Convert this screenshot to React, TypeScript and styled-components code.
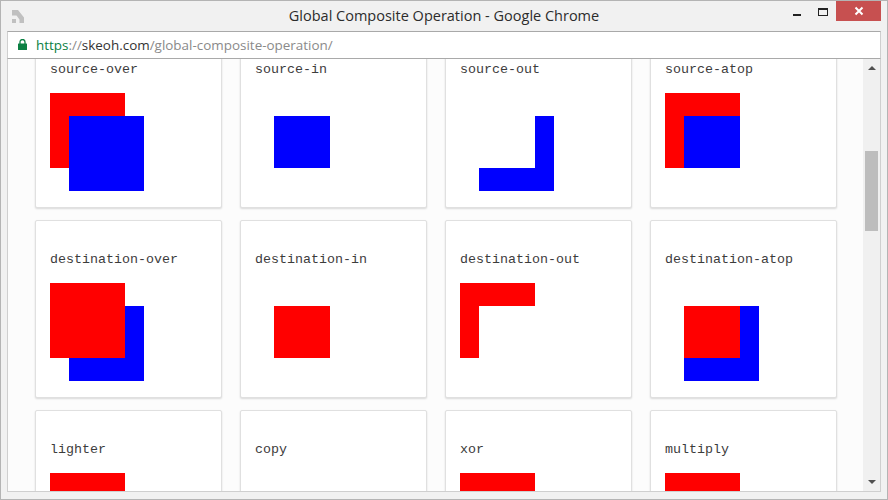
import React from "react";
import styled, { createGlobalStyle } from "styled-components";

const RED = "#ff0000";
const BLUE = "#0000ff";

type Shape = { x: number; y: number; w: number; h: number; fill: string };

type Demo = { name: string; shapes: Shape[] };

const redSquare = (fill = RED): Shape => ({ x: 0, y: 0, w: 75, h: 75, fill });
const blueSquare = (fill = BLUE): Shape => ({ x: 19, y: 23, w: 75, h: 75, fill });
const overlap = (fill: string): Shape => ({ x: 19, y: 23, w: 56, h: 52, fill });

const demos: Demo[] = [
    { name: "source-over", shapes: [redSquare(), blueSquare()] },
    { name: "source-in", shapes: [overlap(BLUE)] },
    {
        name: "source-out",
        shapes: [
            { x: 75, y: 23, w: 19, h: 75, fill: BLUE },
            { x: 19, y: 75, w: 75, h: 23, fill: BLUE },
        ],
    },
    { name: "source-atop", shapes: [redSquare(), overlap(BLUE)] },
    { name: "destination-over", shapes: [blueSquare(), redSquare()] },
    { name: "destination-in", shapes: [overlap(RED)] },
    {
        name: "destination-out",
        shapes: [
            { x: 0, y: 0, w: 75, h: 23, fill: RED },
            { x: 0, y: 0, w: 19, h: 75, fill: RED },
        ],
    },
    { name: "destination-atop", shapes: [blueSquare(), overlap(RED)] },
    { name: "lighter", shapes: [redSquare()] },
    { name: "copy", shapes: [] },
    { name: "xor", shapes: [redSquare()] },
    { name: "multiply", shapes: [redSquare()] },
];

const GlobalStyle = createGlobalStyle`
    html, body {
        margin: 0;
        padding: 0;
        width: 888px;
        height: 500px;
        overflow: hidden;
        background: #f1f1f1;
    }
`;

const Chrome = styled.div`
    box-sizing: border-box;
    width: 888px;
    height: 500px;
    display: flex;
    flex-direction: column;
    border: 1px solid #b4b4b4;
    background: #f1f1f1;
    overflow: hidden;
`;

const TitleBar = styled.div`
    position: relative;
    flex: none;
    height: 30px;
    display: flex;
    align-items: center;
    justify-content: center;
`;

const Title = styled.div`
    font-family: "Open Sans", "Noto Sans", sans-serif;
    font-size: 14.5px;
    color: #2c2c2c;
    margin-top: -1px;
`;

const AppIcon = styled.svg`
    position: absolute;
    left: 11px;
    top: 9px;
`;

const WindowButtons = styled.div`
    position: absolute;
    right: 6px;
    top: 0;
    display: flex;
    align-items: flex-start;
`;

const WinButton = styled.div<{ $shift?: number }>`
    box-sizing: border-box;
    width: 29px;
    height: 20px;
    padding-left: ${(p) => p.$shift ?? 0}px;
    display: flex;
    align-items: center;
    justify-content: center;
`;

const CloseButton = styled(WinButton)`
    width: 45px;
    background: #c75050;
`;

const AddressBar = styled.div`
    flex: none;
    box-sizing: border-box;
    height: 28px;
    margin: 0 6px;
    display: flex;
    align-items: center;
    gap: 9px;
    padding-left: 10px;
    background: #ffffff;
    border: 1px solid #a9a9a9;
    border-right-color: #cfcfcf;
    border-left-color: #cfcfcf;
    font-family: "Open Sans", "Noto Sans", sans-serif;
    font-size: 13.45px;
`;

const LockIcon = styled.svg`
    flex: none;
    margin-top: -2px;
`;

const Url = styled.div`
    color: #8a8a8a;
    white-space: nowrap;
`;

const Scheme = styled.span`
    color: #0b8043;
`;

const Host = styled.span`
    color: #333333;
`;

const Viewport = styled.div`
    flex: 1;
    min-height: 0;
    margin: 0 6px 7px;
    display: flex;
    border: 1px solid #cfcfcf;
    border-top: none;
    background: #fcfcfc;
    overflow: hidden;
`;

const Page = styled.div`
    flex: 1;
    min-width: 0;
    overflow: hidden;
`;

const Grid = styled.div`
    display: grid;
    grid-template-columns: repeat(4, 187px);
    grid-auto-rows: 178px;
    gap: 12px 18px;
    margin: -29px 0 0 27px;
`;

const Card = styled.div`
    box-sizing: border-box;
    padding: 31px 14px 0;
    background: #ffffff;
    border: 1px solid #e0e0e0;
    border-radius: 2px;
    box-shadow: 0 1px 2px rgba(0, 0, 0, 0.14);
    overflow: hidden;
`;

const CardTitle = styled.div`
    font-family: "Liberation Mono", "Courier New", monospace;
    font-size: 13.33px;
    line-height: 16px;
    color: #3c3c3c;
`;

const Preview = styled.svg`
    display: block;
    margin-top: 15px;
`;

const ScrollBar = styled.div`
    flex: none;
    width: 17px;
    display: flex;
    flex-direction: column;
    align-items: center;
    background: #f0f0f0;
`;

const ScrollArrow = styled.svg`
    flex: none;
    margin: 7px 0;
`;

const ScrollTrack = styled.div`
    flex: 1;
    box-sizing: border-box;
    width: 100%;
    padding: 74px 2px 0;
`;

const ScrollThumb = styled.div`
    height: 80px;
    background: #bdbdbd;
`;

export default function App() {
    return (
        <>
            <GlobalStyle />
            <Chrome>
                <TitleBar>
                    <AppIcon width="12" height="13" viewBox="0 0 12 13">
                        <path d="M0 0h6l6 7.5V13H7.5V9.5L4.5 5.5H0z" fill="#c0c0c0" />
                        <rect x="0" y="9" width="4" height="4" fill="#c0c0c0" />
                    </AppIcon>
                    <Title>Global Composite Operation - Google Chrome</Title>
                    <WindowButtons>
                        <WinButton $shift={8}>
                            <svg width="10" height="10" viewBox="0 0 10 10">
                                <rect x="1" y="8" width="8" height="2" fill="#222222" />
                            </svg>
                        </WinButton>
                        <WinButton $shift={2}>
                            <svg width="10" height="10" viewBox="0 0 10 10">
                                <rect x="0.5" y="2.5" width="9" height="7" fill="none" stroke="#222222" />
                                <rect x="0" y="2" width="10" height="2" fill="#222222" />
                            </svg>
                        </WinButton>
                        <CloseButton>
                            <svg width="10" height="10" viewBox="0 0 10 10">
                                <path d="M1.5 1.5l7 7M8.5 1.5l-7 7" stroke="#ffffff" strokeWidth="2" fill="none" />
                            </svg>
                        </CloseButton>
                    </WindowButtons>
                </TitleBar>
                <AddressBar>
                    <LockIcon width="9" height="11" viewBox="0 0 9 11">
                        <path d="M2 5V3a2.5 2.5 0 0 1 5 0V5" fill="none" stroke="#0b8043" strokeWidth="1.3" />
                        <rect x="0" y="4.5" width="9" height="6.5" rx="0.5" fill="#0b8043" />
                    </LockIcon>
                    <Url>
                        <Scheme>https</Scheme>://<Host>skeoh.com</Host>/global-composite-operation/
                    </Url>
                </AddressBar>
                <Viewport>
                    <Page>
                        <Grid>
                            {demos.map((demo) => (
                                <Card key={demo.name}>
                                    <CardTitle>{demo.name}</CardTitle>
                                    <Preview width="94" height="98" viewBox="0 0 94 98">
                                        {demo.shapes.map((s, i) => (
                                            <rect key={i} x={s.x} y={s.y} width={s.w} height={s.h} fill={s.fill} />
                                        ))}
                                    </Preview>
                                </Card>
                            ))}
                        </Grid>
                    </Page>
                    <ScrollBar>
                        <ScrollArrow width="8" height="4" viewBox="0 0 8 4">
                            <path d="M4 0L8 4H0z" fill="#505050" />
                        </ScrollArrow>
                        <ScrollTrack>
                            <ScrollThumb />
                        </ScrollTrack>
                        <ScrollArrow width="8" height="4" viewBox="0 0 8 4">
                            <path d="M0 0h8L4 4z" fill="#505050" />
                        </ScrollArrow>
                    </ScrollBar>
                </Viewport>
            </Chrome>
        </>
    );
}
